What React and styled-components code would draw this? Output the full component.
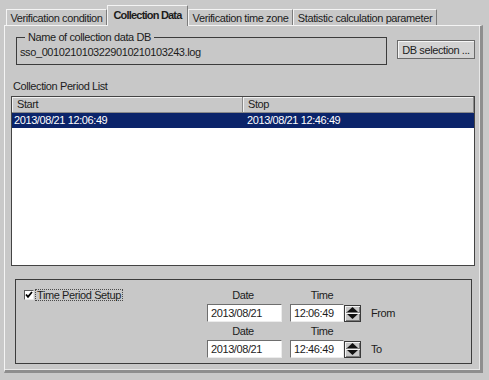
import React from 'react';
import styled, { createGlobalStyle } from 'styled-components';

const Global = createGlobalStyle`
body {
  margin: 0;
  background: #c9c9c9;
  font-family: 'Liberation Sans', Arial, sans-serif;
  font-size: 11px;
  letter-spacing: -0.4px;
  color: #1c1c1c;
}
`;

const Window = styled.div`
width: 489px;
height: 380px;
background: #c9c9c9;
overflow: hidden;
`;

const TabStrip = styled.div`
display: flex;
align-items: flex-end;
height: 25px;
padding-left: 6px;
box-sizing: border-box;
`;

const Tab = styled.div`
position: relative;
z-index: ${p => (p.$active ? 1 : 0)};
width: ${p => p.$w}px;
height: ${p => (p.$active ? 21 : 16)}px;
margin-bottom: ${p => (p.$active ? -1 : 0)}px;
box-sizing: border-box;
display: flex;
align-items: center;
justify-content: center;
padding-bottom: ${p => (p.$active ? 2 : 0)}px;
background: #c8c8c8;
border-top: 1px solid #f4f4f4;
border-left: 1px solid #f4f4f4;
border-right: 1px solid #7c7c7c;
font-weight: ${p => (p.$active ? 700 : 400)};
letter-spacing: ${p => (p.$active ? '-0.8px' : '-0.4px')};
white-space: nowrap;
`;

const Panel = styled.div`
margin-left: 4px;
width: 479px;
box-sizing: border-box;
background: #c8c8c8;
border-top: 1px solid #f4f4f4;
border-left: 1px solid #f4f4f4;
border-right: 3px solid #8e8e8e;
border-bottom: 3px solid #8e8e8e;
box-shadow: inset -1px -1px 0 #e8e8e8;
padding: 5px 5px 6px 6px;
`;

const DbRow = styled.div`
display: flex;
justify-content: space-between;
align-items: flex-start;
padding-left: 5px;
`;

const DbGroup = styled.fieldset`
margin: 0;
width: 371px;
height: 34px;
box-sizing: border-box;
border: 1px solid #3c3c3c;
padding: 3px 4px 0 3px;
min-width: 0;
`;

const Legend = styled.legend`
padding: 0 3px;
margin-left: 5px;
line-height: 12px;
`;

const FileName = styled.div`
line-height: 12px;
white-space: nowrap;
`;

const Button = styled.button`
margin-top: 9px;
width: 78px;
height: 19px;
box-sizing: border-box;
padding: 0;
background: #d2d2d2;
border: 1px solid #6a6a6a;
box-shadow: inset 1px 1px 0 #f6f6f6;
font: inherit;
letter-spacing: inherit;
color: inherit;
`;

const ListLabel = styled.div`
margin-top: 15px;
padding-left: 2px;
line-height: 12px;
`;

const Table = styled.div`
margin-top: 4px;
height: 170px;
box-sizing: border-box;
border: 1px solid #444;
background: #fff;
`;

const HeaderRow = styled.div`
display: flex;
height: 16px;
background: #c8c8c8;
border-bottom: 1px solid #8a8a8a;
box-sizing: border-box;
`;

const HeadCell = styled.div`
flex: ${p => (p.$w ? `0 0 ${p.$w}px` : '1')};
box-sizing: border-box;
padding-left: 5px;
line-height: 15px;
border-right: 1px solid #8a8a8a;
box-shadow: inset 1px 1px 0 #f2f2f2;
`;

const Row = styled.div`
display: flex;
height: 15px;
background: ${p => (p.$selected ? '#0b246a' : '#fff')};
color: ${p => (p.$selected ? '#fff' : 'inherit')};
`;

const Cell = styled.div`
flex: ${p => (p.$w ? `0 0 ${p.$w}px` : '1')};
padding-left: 2px;
line-height: 15px;
white-space: nowrap;
`;

const SetupGroup = styled.div`
margin: 13px 3px 0 4px;
height: 85px;
box-sizing: border-box;
border: 1px solid #3c3c3c;
padding: 8px 0 5px 8px;
display: flex;
align-items: flex-start;
`;

const CheckArea = styled.div`
flex: 0 0 183px;
height: 14px;
display: flex;
align-items: center;
gap: 1px;
`;

const CheckBox = styled.div`
width: 10px;
height: 10px;
box-sizing: border-box;
background: #fff;
border-top: 1px solid #5a5a5a;
border-left: 1px solid #5a5a5a;
border-right: 1px solid #e8e8e8;
border-bottom: 1px solid #e8e8e8;
display: flex;
align-items: center;
justify-content: center;
`;

const CheckLabel = styled.span`
border: 1px dotted #4a4a4a;
padding: 0 1px;
line-height: 10px;
`;

const TimeGrid = styled.div`
display: grid;
grid-template-columns: 75px 71px auto;
grid-template-rows: 14px 18px 14px 18px;
column-gap: 8px;
row-gap: 2px;
align-items: center;
`;

const FieldLabel = styled.div`
text-align: center;
padding-right: ${p => (p.$shift ? 7 : 3)}px;
line-height: 14px;
`;

const Field = styled.div`
height: 18px;
width: ${p => p.$w}px;
box-sizing: border-box;
background: #fff;
border-top: 1px solid #6e6e6e;
border-left: 1px solid #6e6e6e;
border-right: 1px solid #ececec;
border-bottom: 1px solid #ececec;
padding-left: 3px;
line-height: 16px;
`;

const TimeBox = styled.div`
display: flex;
align-items: center;
`;

const Spinner = styled.div`
width: 17px;
height: 17px;
box-sizing: border-box;
border: 1px solid #3a3a3a;
display: flex;
flex-direction: column;
`;

const SpinBtn = styled.div`
flex: 1;
display: flex;
align-items: center;
justify-content: center;
background: #c8c8c8;
box-shadow: inset 1px 1px 0 #f4f4f4, inset -1px -1px 0 #7a7a7a;
`;

const Suffix = styled.div`
padding-left: 2px;
line-height: 18px;
`;

function Spin() {
  return (
    <Spinner>
      <SpinBtn>
        <svg width="11" height="5" viewBox="0 0 11 5">
          <polygon points="5.5,0 11,5 0,5" fill="#111" />
        </svg>
      </SpinBtn>
      <SpinBtn>
        <svg width="11" height="5" viewBox="0 0 11 5">
          <polygon points="0,0 11,0 5.5,5" fill="#111" />
        </svg>
      </SpinBtn>
    </Spinner>
  );
}

export default function App() {
  return (
    <Window>
      <Global />
      <TabStrip>
        <Tab $w={101}>Verification condition</Tab>
        <Tab $w={81} $active>Collection Data</Tab>
        <Tab $w={105}>Verification time zone</Tab>
        <Tab $w={144}>Statistic calculation parameter</Tab>
      </TabStrip>
      <Panel>
        <DbRow>
          <DbGroup>
            <Legend>Name of collection data DB</Legend>
            <FileName>sso_0010210103229010210103243.log</FileName>
          </DbGroup>
          <Button>DB selection ...</Button>
        </DbRow>
        <ListLabel>Collection Period List</ListLabel>
        <Table>
          <HeaderRow>
            <HeadCell $w={231}>Start</HeadCell>
            <HeadCell>Stop</HeadCell>
          </HeaderRow>
          <Row $selected>
            <Cell $w={231}>2013/08/21 12:06:49</Cell>
            <Cell>2013/08/21 12:46:49</Cell>
          </Row>
        </Table>
        <SetupGroup>
          <CheckArea>
            <CheckBox>
              <svg width="8" height="8" viewBox="0 0 8 8">
                <path d="M1 3.5 L3 5.8 L7 1" stroke="#000" strokeWidth="1.8" fill="none" />
              </svg>
            </CheckBox>
            <CheckLabel>Time Period Setup</CheckLabel>
          </CheckArea>
          <TimeGrid>
            <FieldLabel>Date</FieldLabel>
            <FieldLabel $shift>Time</FieldLabel>
            <div />
            <Field $w={75}>2013/08/21</Field>
            <TimeBox>
              <Field $w={54}>12:06:49</Field>
              <Spin />
            </TimeBox>
            <Suffix>From</Suffix>
            <FieldLabel>Date</FieldLabel>
            <FieldLabel $shift>Time</FieldLabel>
            <div />
            <Field $w={75}>2013/08/21</Field>
            <TimeBox>
              <Field $w={54}>12:46:49</Field>
              <Spin />
            </TimeBox>
            <Suffix>To</Suffix>
          </TimeGrid>
        </SetupGroup>
      </Panel>
    </Window>
  );
}
